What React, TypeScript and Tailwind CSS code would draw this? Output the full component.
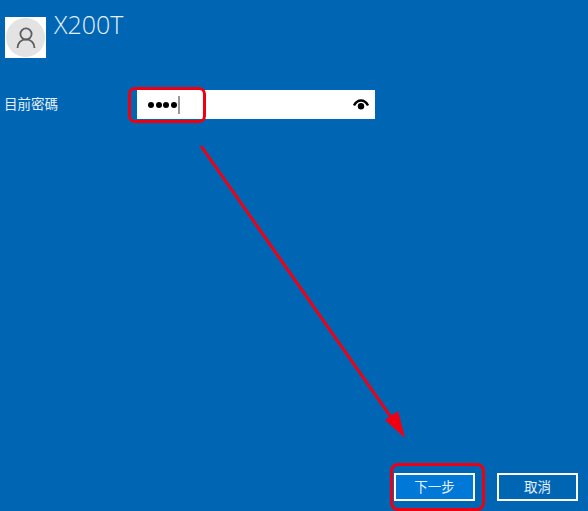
const font = { fontFamily: '"Noto Sans CJK TC", "Open Sans", sans-serif' }

function UserAvatar() {
  return (
    <div className="flex h-[41px] w-[41px] items-center justify-center bg-white">
      <div className="flex h-[39px] w-[39px] items-center justify-center rounded-full bg-[#e3e3e3]">
        <svg width="20" height="22" viewBox="0 0 20 22" fill="none" stroke="#5c5c5c" strokeWidth="1.8">
          <circle cx="10" cy="7" r="5.6" />
          <path d="M1.5 21c0-5 3.4-8.6 8.5-8.6s8.5 3.6 8.5 8.6" />
        </svg>
      </div>
    </div>
  )
}

function RevealIcon() {
  return (
    <svg width="16" height="11" viewBox="0 0 16 11" fill="none">
      <path d="M1 6.5C2.8 3 5.2 1.5 8 1.5s5.2 1.5 7 5" stroke="#000" strokeWidth="2.4" />
      <circle cx="8" cy="7.2" r="3.2" fill="#000" />
    </svg>
  )
}

export default function App() {
  return (
    <div className="relative flex h-[511px] w-[588px] flex-col overflow-hidden bg-[#0066b3] text-white" style={font}>
      <div className="flex items-start gap-[8px] pl-[5px] pt-[17px]">
        <UserAvatar />
        <div className="-mt-[9px] text-[25px] leading-[32px] text-[#e6f0f8]" style={{ fontFamily: '"Open Sans", sans-serif', fontWeight: 300 }}>
          X200T
        </div>
      </div>

      <div className="mt-[32px] flex h-[29px] items-center pl-[4px]">
        <div className="-mt-[2px] w-[133px] text-[13.5px] leading-none text-[#e6f0f8]">目前密碼</div>
        <div className="flex h-[29px] w-[238px] items-center justify-between bg-white pl-[11px] pr-[6px]">
          <div className="flex items-center">
            <div className="flex gap-[1.5px]">
              <span className="h-[6px] w-[6px] rounded-full bg-black" />
              <span className="h-[6px] w-[6px] rounded-full bg-black" />
              <span className="h-[6px] w-[6px] rounded-full bg-black" />
              <span className="h-[6px] w-[6px] rounded-full bg-black" />
            </div>
            <span className="ml-px h-[18px] w-[2px] bg-[#999]" />
          </div>
          <RevealIcon />
        </div>
      </div>

      <div className="mt-auto flex justify-end gap-[22px] pb-[10px] pr-[10px]">
        <button className="h-[28px] w-[81px] border-2 border-white bg-[#0078d7] text-[13.5px] leading-none text-[#e6f0f8]">
          下一步
        </button>
        <button className="h-[28px] w-[81px] border-2 border-white bg-[#0066b3] text-[13.5px] leading-none text-[#e6f0f8]">
          取消
        </button>
      </div>

      <div className="absolute left-[128px] top-[87px] h-[36px] w-[78px] rounded-[7px] border-[3.5px] border-[#ee0010]" />
      <div className="absolute left-[390px] top-[463px] h-[48px] w-[95px] rounded-[8px] border-[3.5px] border-[#ee0010]" />

      <svg className="pointer-events-none absolute left-0 top-0" width="588" height="511" viewBox="0 0 588 511">
        <path d="M201 146L393 420" stroke="#f00010" strokeWidth="3" />
        <path d="M405 438L385 420L398 411Z" fill="#f00010" />
      </svg>
    </div>
  )
}
